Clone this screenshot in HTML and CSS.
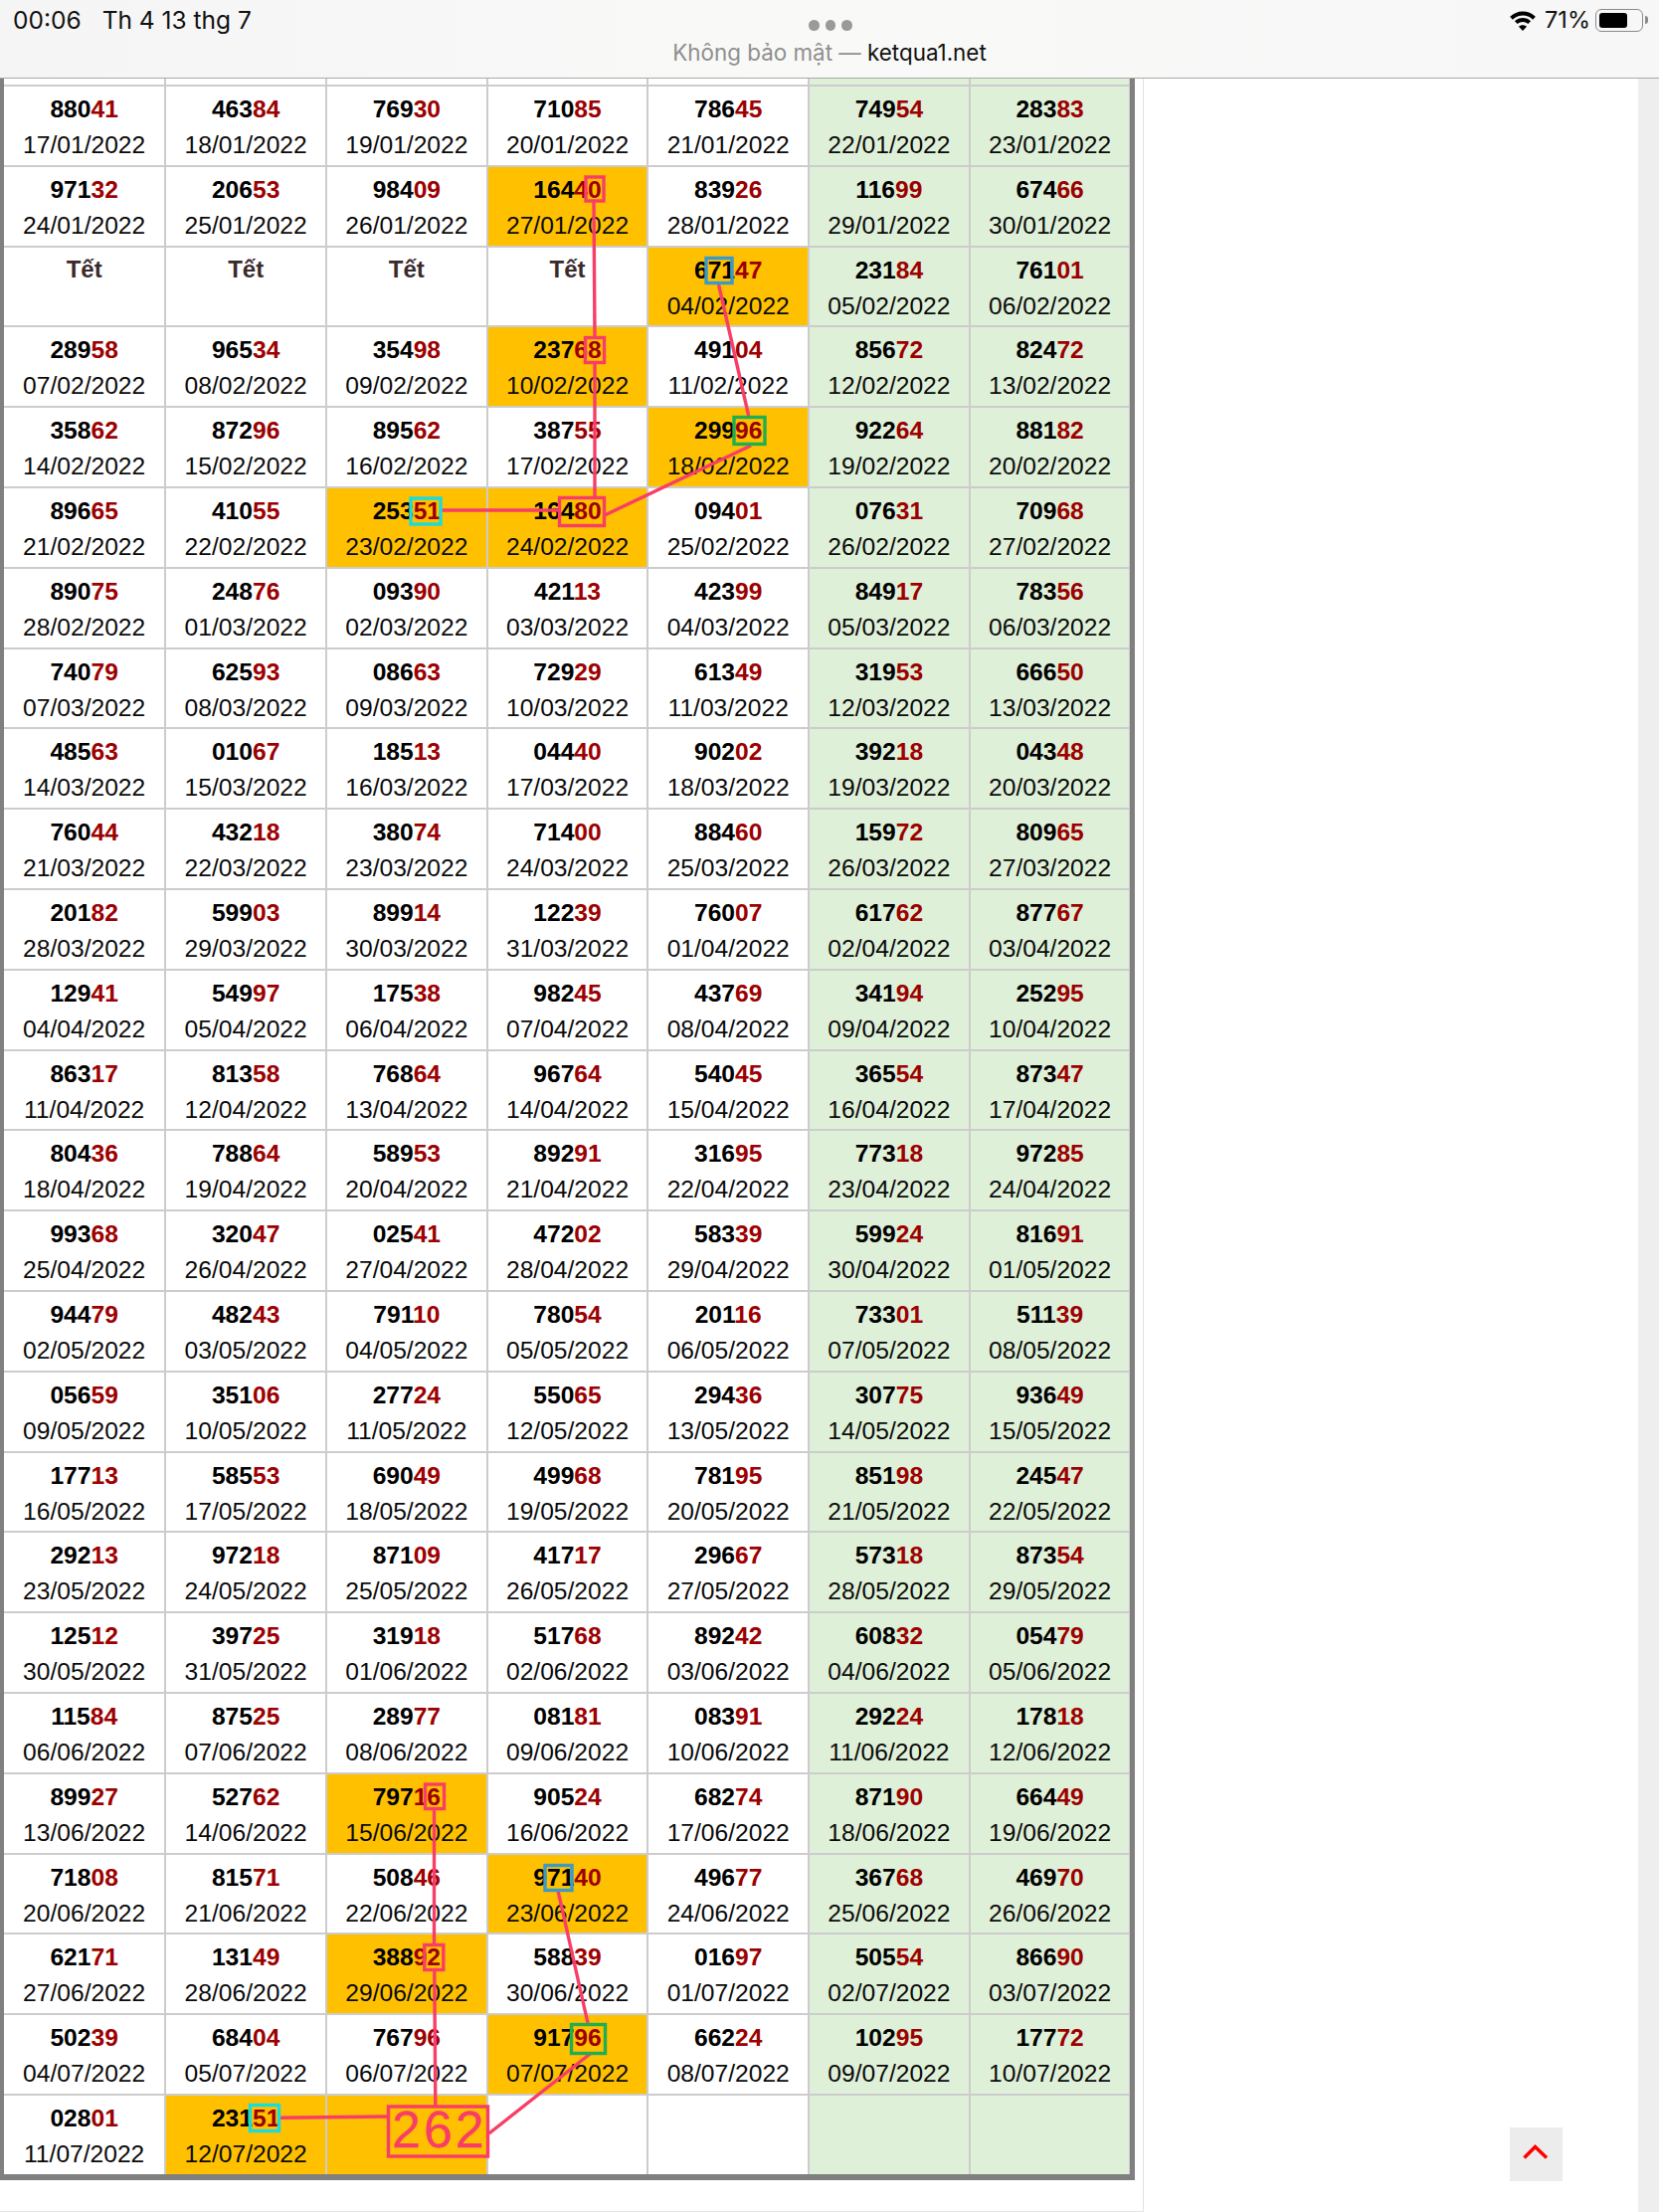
FILE: index.html
```html
<!DOCTYPE html>
<html lang="vi">
<head>
<meta charset="utf-8">
<title>ketqua1.net</title>
<link rel="stylesheet" href="styles.css">
</head>
<body>
<div class="page">
  <header class="status">
    <div class="clock"><span>00:06</span><span>Th 4 13 thg 7</span></div>
    <div class="address">
      <div class="dots"><i></i><i></i><i></i></div>
      <div class="url"><span class="insecure">Không bảo mật —</span> <span class="host">ketqua1.net</span></div>
    </div>
    <div class="indicators">
      <svg class="wifi" viewBox="0 0 28 22" width="28" height="22"><path class="wifi-arc" d="M2.5 8.2C9 2 19 2 25.5 8.2"/><path class="wifi-arc" d="M7.3 12.6C11 9.2 17 9.2 20.7 12.6"/><path class="wifi-dot" d="M14 21l-4-4.200C12 14.800 16 14.800 18 16.800z"/></svg>
      <span class="percent">71%</span>
      <div class="battery"><div class="charge"></div></div>
      <div class="battery-cap"></div>
    </div>
  </header>
  <div class="content">
    <main class="main">
      <div class="results">
        <div class="cell top"></div><div class="cell top"></div><div class="cell top"></div><div class="cell top"></div><div class="cell top"></div><div class="cell top end"></div><div class="cell top end"></div>

        <div class="cell"><b>880<em>41</em></b><time>17/01/2022</time></div>
        <div class="cell"><b>463<em>84</em></b><time>18/01/2022</time></div>
        <div class="cell"><b>769<em>30</em></b><time>19/01/2022</time></div>
        <div class="cell"><b>710<em>85</em></b><time>20/01/2022</time></div>
        <div class="cell"><b>786<em>45</em></b><time>21/01/2022</time></div>
        <div class="cell end"><b>749<em>54</em></b><time>22/01/2022</time></div>
        <div class="cell end"><b>283<em>83</em></b><time>23/01/2022</time></div>

        <div class="cell"><b>971<em>32</em></b><time>24/01/2022</time></div>
        <div class="cell"><b>206<em>53</em></b><time>25/01/2022</time></div>
        <div class="cell"><b>984<em>09</em></b><time>26/01/2022</time></div>
        <div class="cell hit"><b>164<em>40</em></b><time>27/01/2022</time></div>
        <div class="cell"><b>839<em>26</em></b><time>28/01/2022</time></div>
        <div class="cell end"><b>116<em>99</em></b><time>29/01/2022</time></div>
        <div class="cell end"><b>674<em>66</em></b><time>30/01/2022</time></div>

        <div class="cell"><strong>Tết</strong></div>
        <div class="cell"><strong>Tết</strong></div>
        <div class="cell"><strong>Tết</strong></div>
        <div class="cell"><strong>Tết</strong></div>
        <div class="cell hit"><b>671<em>47</em></b><time>04/02/2022</time></div>
        <div class="cell end"><b>231<em>84</em></b><time>05/02/2022</time></div>
        <div class="cell end"><b>761<em>01</em></b><time>06/02/2022</time></div>

        <div class="cell"><b>289<em>58</em></b><time>07/02/2022</time></div>
        <div class="cell"><b>965<em>34</em></b><time>08/02/2022</time></div>
        <div class="cell"><b>354<em>98</em></b><time>09/02/2022</time></div>
        <div class="cell hit"><b>237<em>68</em></b><time>10/02/2022</time></div>
        <div class="cell"><b>491<em>04</em></b><time>11/02/2022</time></div>
        <div class="cell end"><b>856<em>72</em></b><time>12/02/2022</time></div>
        <div class="cell end"><b>824<em>72</em></b><time>13/02/2022</time></div>

        <div class="cell"><b>358<em>62</em></b><time>14/02/2022</time></div>
        <div class="cell"><b>872<em>96</em></b><time>15/02/2022</time></div>
        <div class="cell"><b>895<em>62</em></b><time>16/02/2022</time></div>
        <div class="cell"><b>387<em>55</em></b><time>17/02/2022</time></div>
        <div class="cell hit"><b>299<em>96</em></b><time>18/02/2022</time></div>
        <div class="cell end"><b>922<em>64</em></b><time>19/02/2022</time></div>
        <div class="cell end"><b>881<em>82</em></b><time>20/02/2022</time></div>

        <div class="cell"><b>896<em>65</em></b><time>21/02/2022</time></div>
        <div class="cell"><b>410<em>55</em></b><time>22/02/2022</time></div>
        <div class="cell hit"><b>253<em>51</em></b><time>23/02/2022</time></div>
        <div class="cell hit"><b>164<em>80</em></b><time>24/02/2022</time></div>
        <div class="cell"><b>094<em>01</em></b><time>25/02/2022</time></div>
        <div class="cell end"><b>076<em>31</em></b><time>26/02/2022</time></div>
        <div class="cell end"><b>709<em>68</em></b><time>27/02/2022</time></div>

        <div class="cell"><b>890<em>75</em></b><time>28/02/2022</time></div>
        <div class="cell"><b>248<em>76</em></b><time>01/03/2022</time></div>
        <div class="cell"><b>093<em>90</em></b><time>02/03/2022</time></div>
        <div class="cell"><b>421<em>13</em></b><time>03/03/2022</time></div>
        <div class="cell"><b>423<em>99</em></b><time>04/03/2022</time></div>
        <div class="cell end"><b>849<em>17</em></b><time>05/03/2022</time></div>
        <div class="cell end"><b>783<em>56</em></b><time>06/03/2022</time></div>

        <div class="cell"><b>740<em>79</em></b><time>07/03/2022</time></div>
        <div class="cell"><b>625<em>93</em></b><time>08/03/2022</time></div>
        <div class="cell"><b>086<em>63</em></b><time>09/03/2022</time></div>
        <div class="cell"><b>729<em>29</em></b><time>10/03/2022</time></div>
        <div class="cell"><b>613<em>49</em></b><time>11/03/2022</time></div>
        <div class="cell end"><b>319<em>53</em></b><time>12/03/2022</time></div>
        <div class="cell end"><b>666<em>50</em></b><time>13/03/2022</time></div>

        <div class="cell"><b>485<em>63</em></b><time>14/03/2022</time></div>
        <div class="cell"><b>010<em>67</em></b><time>15/03/2022</time></div>
        <div class="cell"><b>185<em>13</em></b><time>16/03/2022</time></div>
        <div class="cell"><b>044<em>40</em></b><time>17/03/2022</time></div>
        <div class="cell"><b>902<em>02</em></b><time>18/03/2022</time></div>
        <div class="cell end"><b>392<em>18</em></b><time>19/03/2022</time></div>
        <div class="cell end"><b>043<em>48</em></b><time>20/03/2022</time></div>

        <div class="cell"><b>760<em>44</em></b><time>21/03/2022</time></div>
        <div class="cell"><b>432<em>18</em></b><time>22/03/2022</time></div>
        <div class="cell"><b>380<em>74</em></b><time>23/03/2022</time></div>
        <div class="cell"><b>714<em>00</em></b><time>24/03/2022</time></div>
        <div class="cell"><b>884<em>60</em></b><time>25/03/2022</time></div>
        <div class="cell end"><b>159<em>72</em></b><time>26/03/2022</time></div>
        <div class="cell end"><b>809<em>65</em></b><time>27/03/2022</time></div>

        <div class="cell"><b>201<em>82</em></b><time>28/03/2022</time></div>
        <div class="cell"><b>599<em>03</em></b><time>29/03/2022</time></div>
        <div class="cell"><b>899<em>14</em></b><time>30/03/2022</time></div>
        <div class="cell"><b>122<em>39</em></b><time>31/03/2022</time></div>
        <div class="cell"><b>760<em>07</em></b><time>01/04/2022</time></div>
        <div class="cell end"><b>617<em>62</em></b><time>02/04/2022</time></div>
        <div class="cell end"><b>877<em>67</em></b><time>03/04/2022</time></div>

        <div class="cell"><b>129<em>41</em></b><time>04/04/2022</time></div>
        <div class="cell"><b>549<em>97</em></b><time>05/04/2022</time></div>
        <div class="cell"><b>175<em>38</em></b><time>06/04/2022</time></div>
        <div class="cell"><b>982<em>45</em></b><time>07/04/2022</time></div>
        <div class="cell"><b>437<em>69</em></b><time>08/04/2022</time></div>
        <div class="cell end"><b>341<em>94</em></b><time>09/04/2022</time></div>
        <div class="cell end"><b>252<em>95</em></b><time>10/04/2022</time></div>

        <div class="cell"><b>863<em>17</em></b><time>11/04/2022</time></div>
        <div class="cell"><b>813<em>58</em></b><time>12/04/2022</time></div>
        <div class="cell"><b>768<em>64</em></b><time>13/04/2022</time></div>
        <div class="cell"><b>967<em>64</em></b><time>14/04/2022</time></div>
        <div class="cell"><b>540<em>45</em></b><time>15/04/2022</time></div>
        <div class="cell end"><b>365<em>54</em></b><time>16/04/2022</time></div>
        <div class="cell end"><b>873<em>47</em></b><time>17/04/2022</time></div>

        <div class="cell"><b>804<em>36</em></b><time>18/04/2022</time></div>
        <div class="cell"><b>788<em>64</em></b><time>19/04/2022</time></div>
        <div class="cell"><b>589<em>53</em></b><time>20/04/2022</time></div>
        <div class="cell"><b>892<em>91</em></b><time>21/04/2022</time></div>
        <div class="cell"><b>316<em>95</em></b><time>22/04/2022</time></div>
        <div class="cell end"><b>773<em>18</em></b><time>23/04/2022</time></div>
        <div class="cell end"><b>972<em>85</em></b><time>24/04/2022</time></div>

        <div class="cell"><b>993<em>68</em></b><time>25/04/2022</time></div>
        <div class="cell"><b>320<em>47</em></b><time>26/04/2022</time></div>
        <div class="cell"><b>025<em>41</em></b><time>27/04/2022</time></div>
        <div class="cell"><b>472<em>02</em></b><time>28/04/2022</time></div>
        <div class="cell"><b>583<em>39</em></b><time>29/04/2022</time></div>
        <div class="cell end"><b>599<em>24</em></b><time>30/04/2022</time></div>
        <div class="cell end"><b>816<em>91</em></b><time>01/05/2022</time></div>

        <div class="cell"><b>944<em>79</em></b><time>02/05/2022</time></div>
        <div class="cell"><b>482<em>43</em></b><time>03/05/2022</time></div>
        <div class="cell"><b>791<em>10</em></b><time>04/05/2022</time></div>
        <div class="cell"><b>780<em>54</em></b><time>05/05/2022</time></div>
        <div class="cell"><b>201<em>16</em></b><time>06/05/2022</time></div>
        <div class="cell end"><b>733<em>01</em></b><time>07/05/2022</time></div>
        <div class="cell end"><b>511<em>39</em></b><time>08/05/2022</time></div>

        <div class="cell"><b>056<em>59</em></b><time>09/05/2022</time></div>
        <div class="cell"><b>351<em>06</em></b><time>10/05/2022</time></div>
        <div class="cell"><b>277<em>24</em></b><time>11/05/2022</time></div>
        <div class="cell"><b>550<em>65</em></b><time>12/05/2022</time></div>
        <div class="cell"><b>294<em>36</em></b><time>13/05/2022</time></div>
        <div class="cell end"><b>307<em>75</em></b><time>14/05/2022</time></div>
        <div class="cell end"><b>936<em>49</em></b><time>15/05/2022</time></div>

        <div class="cell"><b>177<em>13</em></b><time>16/05/2022</time></div>
        <div class="cell"><b>585<em>53</em></b><time>17/05/2022</time></div>
        <div class="cell"><b>690<em>49</em></b><time>18/05/2022</time></div>
        <div class="cell"><b>499<em>68</em></b><time>19/05/2022</time></div>
        <div class="cell"><b>781<em>95</em></b><time>20/05/2022</time></div>
        <div class="cell end"><b>851<em>98</em></b><time>21/05/2022</time></div>
        <div class="cell end"><b>245<em>47</em></b><time>22/05/2022</time></div>

        <div class="cell"><b>292<em>13</em></b><time>23/05/2022</time></div>
        <div class="cell"><b>972<em>18</em></b><time>24/05/2022</time></div>
        <div class="cell"><b>871<em>09</em></b><time>25/05/2022</time></div>
        <div class="cell"><b>417<em>17</em></b><time>26/05/2022</time></div>
        <div class="cell"><b>296<em>67</em></b><time>27/05/2022</time></div>
        <div class="cell end"><b>573<em>18</em></b><time>28/05/2022</time></div>
        <div class="cell end"><b>873<em>54</em></b><time>29/05/2022</time></div>

        <div class="cell"><b>125<em>12</em></b><time>30/05/2022</time></div>
        <div class="cell"><b>397<em>25</em></b><time>31/05/2022</time></div>
        <div class="cell"><b>319<em>18</em></b><time>01/06/2022</time></div>
        <div class="cell"><b>517<em>68</em></b><time>02/06/2022</time></div>
        <div class="cell"><b>892<em>42</em></b><time>03/06/2022</time></div>
        <div class="cell end"><b>608<em>32</em></b><time>04/06/2022</time></div>
        <div class="cell end"><b>054<em>79</em></b><time>05/06/2022</time></div>

        <div class="cell"><b>115<em>84</em></b><time>06/06/2022</time></div>
        <div class="cell"><b>875<em>25</em></b><time>07/06/2022</time></div>
        <div class="cell"><b>289<em>77</em></b><time>08/06/2022</time></div>
        <div class="cell"><b>081<em>81</em></b><time>09/06/2022</time></div>
        <div class="cell"><b>083<em>91</em></b><time>10/06/2022</time></div>
        <div class="cell end"><b>292<em>24</em></b><time>11/06/2022</time></div>
        <div class="cell end"><b>178<em>18</em></b><time>12/06/2022</time></div>

        <div class="cell"><b>899<em>27</em></b><time>13/06/2022</time></div>
        <div class="cell"><b>527<em>62</em></b><time>14/06/2022</time></div>
        <div class="cell hit"><b>797<em>16</em></b><time>15/06/2022</time></div>
        <div class="cell"><b>905<em>24</em></b><time>16/06/2022</time></div>
        <div class="cell"><b>682<em>74</em></b><time>17/06/2022</time></div>
        <div class="cell end"><b>871<em>90</em></b><time>18/06/2022</time></div>
        <div class="cell end"><b>664<em>49</em></b><time>19/06/2022</time></div>

        <div class="cell"><b>718<em>08</em></b><time>20/06/2022</time></div>
        <div class="cell"><b>815<em>71</em></b><time>21/06/2022</time></div>
        <div class="cell"><b>508<em>46</em></b><time>22/06/2022</time></div>
        <div class="cell hit"><b>971<em>40</em></b><time>23/06/2022</time></div>
        <div class="cell"><b>496<em>77</em></b><time>24/06/2022</time></div>
        <div class="cell end"><b>367<em>68</em></b><time>25/06/2022</time></div>
        <div class="cell end"><b>469<em>70</em></b><time>26/06/2022</time></div>

        <div class="cell"><b>621<em>71</em></b><time>27/06/2022</time></div>
        <div class="cell"><b>131<em>49</em></b><time>28/06/2022</time></div>
        <div class="cell hit"><b>388<em>92</em></b><time>29/06/2022</time></div>
        <div class="cell"><b>588<em>39</em></b><time>30/06/2022</time></div>
        <div class="cell"><b>016<em>97</em></b><time>01/07/2022</time></div>
        <div class="cell end"><b>505<em>54</em></b><time>02/07/2022</time></div>
        <div class="cell end"><b>866<em>90</em></b><time>03/07/2022</time></div>

        <div class="cell"><b>502<em>39</em></b><time>04/07/2022</time></div>
        <div class="cell"><b>684<em>04</em></b><time>05/07/2022</time></div>
        <div class="cell"><b>767<em>96</em></b><time>06/07/2022</time></div>
        <div class="cell hit"><b>917<em>96</em></b><time>07/07/2022</time></div>
        <div class="cell"><b>662<em>24</em></b><time>08/07/2022</time></div>
        <div class="cell end"><b>102<em>95</em></b><time>09/07/2022</time></div>
        <div class="cell end"><b>177<em>72</em></b><time>10/07/2022</time></div>

        <div class="cell"><b>028<em>01</em></b><time>11/07/2022</time></div>
        <div class="cell hit"><b>231<em>51</em></b><time>12/07/2022</time></div>
        <div class="cell hit"></div>
        <div class="cell"></div>
        <div class="cell"></div>
        <div class="cell end"></div>
        <div class="cell end"></div>
      </div>
    </main>
    <aside class="side"></aside>
    <div class="gutter"></div>
  </div>

  <svg class="marks" viewBox="0 0 1668 2224" width="1668" height="2224">
    <g class="pink">
      <rect x="589" y="178" width="18" height="24"/>
      <path d="M597 203L598 338"/>
      <rect x="588.500" y="339.500" width="19" height="25"/>
      <path d="M598 365L598 499"/>
      <rect x="562.500" y="500.500" width="45" height="28"/>
      <path d="M608 518L755 448"/>
      <path d="M752.700 418L722.500 286"/>
      <path d="M444 513L561 513"/>
      <rect x="427.500" y="1794" width="19" height="24.500"/>
      <path d="M436.500 1819L436.500 1954"/>
      <rect x="426.800" y="1955.500" width="19" height="25"/>
      <path d="M436.800 1982L437.800 2117"/>
      <rect x="390.500" y="2118" width="100" height="50"/>
      <path d="M389 2128L281.700 2129.300"/>
      <path d="M561 1901L591 2034"/>
      <path d="M593.300 2065L491.700 2145"/>
      <text class="hand" x="394" y="2159">262</text>
    </g>
    <rect class="blue" x="710" y="259.500" width="26" height="25"/>
    <rect class="green" x="738" y="419.500" width="31" height="27"/>
    <rect class="cyan" x="413" y="501" width="30" height="26"/>
    <rect class="blue" x="548" y="1875.500" width="27" height="25"/>
    <rect class="green" x="574.500" y="2035.500" width="34" height="29"/>
    <rect class="cyan" x="251.500" y="2116.500" width="29" height="26"/>
  </svg>

  <a class="to-top" href="#" aria-label="Lên đầu trang">
    <svg viewBox="0 0 53 54" width="53" height="54"><path d="M14.500 30.500L25.500 19.500L37 30.500"/></svg>
  </a>
</div>
</body>
</html>
```
FILE: styles.css
```css
* { box-sizing: border-box; }
html, body { margin: 0; padding: 0; background: #fff; }
body { font-family: "Liberation Sans", Arial, sans-serif; color: #000; }

.page {
  position: relative;
  width: 1668px;
  height: 2224px;
  overflow: hidden;
  background: #fff;
}

/* status + address bar */
.status {
  display: flex;
  justify-content: space-between;
  height: 79px;
  padding: 0 11px 0 13px;
  border-bottom: 1px solid #a9a9a9;
  background: linear-gradient(90deg, #f6f5f6 0%, #f9f9f8 45%, #f7f7f7 100%);
  font-family: Inter, "Liberation Sans", sans-serif;
}
.clock {
  display: flex;
  gap: 21px;
  width: 350px;
  padding-top: 6px;
  font-size: 24.500px;
  line-height: 28px;
  color: #111;
}
.address {
  display: flex;
  flex-direction: column;
  align-items: center;
  padding-top: 20px;
}
.dots { display: flex; gap: 6px; }
.dots i {
  display: block;
  width: 10.500px;
  height: 10.500px;
  border-radius: 50%;
  background: #9a9a9a;
}
.url {
  margin-top: 8px;
  margin-left: -2px;
  font-size: 22.400px;
  line-height: 28px;
  white-space: nowrap;
}
.insecure { color: #8f8f8f; }
.host { color: #111; }
.indicators {
  display: flex;
  align-items: flex-start;
  width: 350px;
  justify-content: flex-end;
  padding-top: 9px;
}
.wifi { margin-top: 1px; margin-right: 8px; }
.wifi-arc { fill: none; stroke: #000; stroke-width: 4px; }
.wifi-dot { fill: #000; }
.percent {
  margin-top: -3px;
  margin-right: 5px;
  font-size: 23.500px;
  line-height: 28px;
  color: #111;
}
.battery {
  width: 48px;
  height: 23px;
  padding: 2.500px 3px;
  border: 1.500px solid #8a8a8a;
  border-radius: 6px;
}
.charge {
  width: 28px;
  height: 15.500px;
  border-radius: 3px;
  background: #000;
}
.battery-cap {
  width: 3px;
  height: 8px;
  margin: 7px 0 0 2px;
  border-radius: 0 3px 3px 0;
  background: #8a8a8a;
}

/* page body */
.content { display: flex; height: 2145px; }
.main {
  width: 1150px;
  height: 2145px;
  border-right: 1px solid #e2e2e2;
  border-bottom: 1px solid #e6e6e6;
}
.side { flex: 1; }
.gutter { width: 21px; background: #eeeeee; }

.results {
  display: grid;
  grid-template-columns: 161.300px repeat(6, 159.700px);
  grid-template-rows: 6px repeat(26, 78.800px);
  gap: 2px;
  width: 1141px;
  border-left: 4px solid #808080;
  border-right: 5.500px solid #808080;
  border-bottom: 6px solid #808080;
  background: #cccccc;
}
.cell {
  display: flex;
  flex-direction: column;
  align-items: center;
  padding-top: 5px;
  background: #fff;
  font-size: 24.600px;
  line-height: 35px;
  white-space: nowrap;
}
.cell.top { padding: 0; }
.cell.end { background: #dff0d8; }
.cell.hit { background: #ffc000; }
.cell b { font-weight: 700; color: #000; }
.cell em { font-style: normal; color: #9c0000; }
.cell time { margin-top: 1px; color: #0a0a0a; }
.cell strong { font-size: 24px; font-weight: 700; color: #3a2a2c; line-height: 34px; }

/* hand-drawn annotation over the table */
.marks { position: absolute; left: 0; top: 0; pointer-events: none; }
.marks rect, .marks path { fill: none; stroke-width: 3.400px; }
.pink rect, .pink path { stroke: #f83e66; }
.blue { stroke: #3a9ac8; }
.green { stroke: #22ad50; }
.cyan { stroke: #1adcdc; }
.hand {
  fill: #f83e66;
  stroke: #f83e66;
  stroke-width: 0.300px;
  font-family: "Liberation Sans", Arial, sans-serif;
  font-size: 52px;
  letter-spacing: 3px;
}

/* back-to-top button */
.to-top {
  position: absolute;
  right: 97px;
  bottom: 31px;
  display: block;
  width: 53px;
  height: 54px;
  background: #ececec;
}
.to-top svg { display: block; }
.to-top path { fill: none; stroke: #ff0000; stroke-width: 3.500px; }
```
